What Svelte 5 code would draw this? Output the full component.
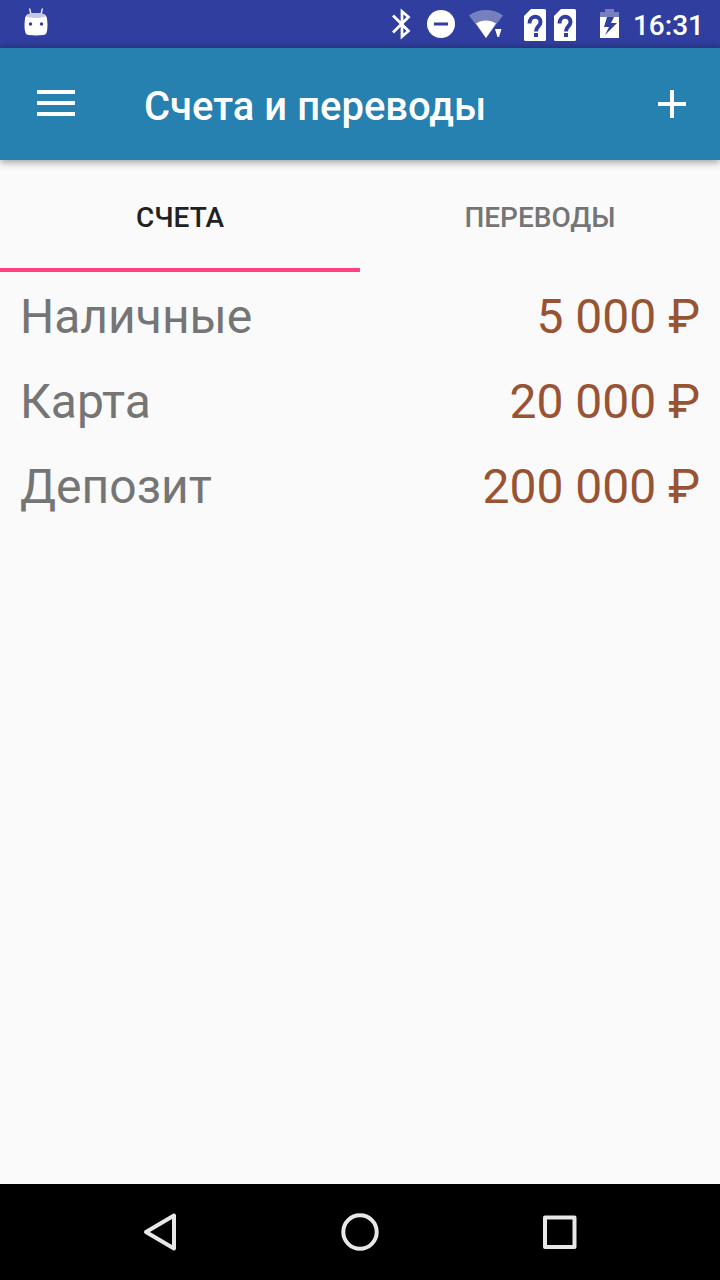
<script>
  const tabs = ['Счета', 'Переводы'];
  let activeTab = $state(0);

  const accounts = [
    { name: 'Наличные', amount: '5 000 ₽' },
    { name: 'Карта', amount: '20 000 ₽' },
    { name: 'Депозит', amount: '200 000 ₽' },
  ];
</script>

<div class="screen">
  <!-- System status bar -->
  <div class="status-bar">
    <svg width="24" height="48" viewBox="0 0 24 48" aria-hidden="true">
      <path d="M5.5 8.5L7 14M18.5 8.5L17 14" stroke="#dfe1f1" stroke-width="1.5" />
      <path d="M1 19c0-4 4-6 11-6s11 2 11 6c.7 5 .6 9 0 12-.5 3-2 4-4 4-5 .6-9 .6-14 0-2 0-3.5-1-4-4-.6-3-.7-7 0-12z" fill="#fff" />
      <path d="M2 16c1-2.2 5-3 10-3s9 .8 10 3c-3 2.500-17 2.500-20 0z" fill="#c5c8e4" />
      <circle cx="6.5" cy="24" r="1.7" fill="#303f9f" />
      <circle cx="17.5" cy="24" r="1.7" fill="#303f9f" />
    </svg>

    <div class="status-icons">
      <svg width="22" height="48" viewBox="0 0 22 48" aria-hidden="true">
        <path d="M2 15.500L17.500 31L11 36.500V11.500L17.500 17L2 32.500" fill="none" stroke="#fff" stroke-width="2.7" />
      </svg>
      <svg width="28" height="48" viewBox="0 0 28 48" aria-hidden="true">
        <circle cx="14" cy="24" r="14" fill="#fff" />
        <path d="M7 24h14" stroke="#303f9f" stroke-width="3" />
      </svg>
      <svg width="36" height="48" viewBox="0 0 36 48" aria-hidden="true">
        <path d="M0 15.500C10 8.200 24 8.200 34 15.500L24.500 28L17 38z" fill="#7680bf" />
        <path d="M7 23.500C13 19.500 21 19.500 27 23.500L17 38z" fill="#fff" />
        <path d="M26 29h6.500l-2.500 8h-1.500z" fill="#fff" />
      </svg>
      <div class="sims">
        {#each [1, 2] as slot (slot)}
          <svg width="22" height="48" viewBox="0 0 22 48" aria-hidden="true">
            <path d="M7 9H20.500Q22 9 22 10.500V39.500Q22 41 20.500 41H1.500Q0 41 0 39.500V16z" fill="#fff" />
            <path d="M5.500 23.500C5.500 14.800 16.500 15 16.500 22C16.500 26.500 12 26.500 12 31.500" fill="none" stroke="#303f9f" stroke-width="4" />
            <path d="M10 33h4v4h-4z" fill="#303f9f" />
          </svg>
        {/each}
      </div>
      <svg width="24" height="48" viewBox="0 0 24 48" aria-hidden="true">
        <path d="M5 17v-5h5V9h9v3h5v5z" fill="#7680bf" />
        <path d="M5 17h19v21H5z" fill="#fff" />
        <path d="M12 17L9 27h5l-4 8L22 23h-6L19 17z" fill="#303f9f" />
      </svg>
      <time class="clock">16:31</time>
    </div>
  </div>

  <header class="app-bar">
    <button class="icon-btn menu" aria-label="Меню">
      <svg width="38" height="48" viewBox="0 0 38 48">
        <path d="M0 12h38M0 23h38M0 34h38" stroke="#fff" stroke-width="4" />
      </svg>
    </button>
    <h1>Счета и переводы</h1>
    <button class="icon-btn" aria-label="Добавить">
      <svg width="48" height="48" viewBox="0 0 48 48">
        <path d="M10 24h28M24 10v28" stroke="#fff" stroke-width="4" />
      </svg>
    </button>
  </header>

  <div class="tabs" role="tablist">
    {#each tabs as tab, i}
      <button
        class="tab"
        class:active={activeTab === i}
        role="tab"
        aria-selected={activeTab === i}
        onclick={() => (activeTab = i)}
      >
        {tab}
      </button>
    {/each}
  </div>

  <main>
    {#if activeTab === 0}
      <ul class="accounts">
        {#each accounts as account}
          <li>
            <span>{account.name}</span>
            <span class="amount">{account.amount}</span>
          </li>
        {/each}
      </ul>
    {/if}
  </main>

  <!-- System navigation -->
  <nav class="nav-bar">
    <button aria-label="Назад">
      <svg width="48" height="48" viewBox="0 0 48 48">
        <path d="M10 24L38 7.500v33z" />
      </svg>
    </button>
    <button aria-label="Домой">
      <svg width="48" height="48" viewBox="0 0 48 48">
        <circle cx="24" cy="24" r="16.700" />
      </svg>
    </button>
    <button aria-label="Недавние">
      <svg width="48" height="48" viewBox="0 0 48 48">
        <rect x="9" y="9.500" width="29.500" height="29.500" />
      </svg>
    </button>
  </nav>
</div>

<style>
  :global(body) {
    margin: 0;
    background: #fafafa;
  }

  .screen {
    display: flex;
    flex-direction: column;
    min-height: 100vh;
    background: #fafafa;
    font-family: Roboto, 'Noto Sans', sans-serif;
  }

  button {
    padding: 0;
    border: none;
    background: none;
    font-family: inherit;
    cursor: pointer;
  }

  svg {
    display: block;
    flex-shrink: 0;
  }

  .status-bar {
    display: flex;
    justify-content: space-between;
    align-items: center;
    height: 48px;
    padding: 0 16px 0 24px;
    background: linear-gradient(180deg, #303f9f 88%, #2c3a8f 100%);
  }

  .status-icons {
    display: flex;
    align-items: center;
    gap: 14px;
  }

  .sims {
    display: flex;
    gap: 8px;
    padding: 0 5px;
  }

  .clock {
    padding-top: 4px;
    color: #fff;
    font-size: 28px;
    font-weight: 500;
    line-height: 44px;
  }

  .app-bar {
    display: flex;
    align-items: center;
    height: 112px;
    background: #2680b0;
    box-shadow: 0 2px 8px rgba(0, 0, 0, 0.4);
  }

  .icon-btn {
    display: flex;
    align-items: center;
    justify-content: center;
    width: 96px;
    height: 112px;
  }

  .menu {
    padding-left: 16px;
  }

  h1 {
    flex: 1;
    margin: 0;
    padding: 6px 0 0 48px;
    color: #fff;
    font-size: 40px;
    font-weight: 500;
    line-height: 48px;
  }

  .tabs {
    display: flex;
  }

  .tab {
    flex: 1;
    height: 112px;
    padding-top: 6px;
    border-bottom: 4px solid transparent;
    color: #757575;
    font-size: 28px;
    font-weight: 500;
    text-transform: uppercase;
  }

  .tab.active {
    border-bottom-color: #ff4081;
    color: #212121;
  }

  main {
    flex: 1;
  }

  .accounts {
    margin: 0;
    padding: 2px 20px;
    list-style: none;
  }

  .accounts li {
    display: flex;
    justify-content: space-between;
    padding: 14px 0;
    color: #757575;
    font-size: 48px;
    line-height: 57px;
  }

  .accounts .amount {
    color: #985332;
  }

  .nav-bar {
    display: flex;
    height: 96px;
    padding: 0 60px;
    background: #000;
  }

  .nav-bar button {
    display: flex;
    flex: 1;
    align-items: center;
    justify-content: center;
  }

  .nav-bar svg {
    fill: none;
    stroke: #e8e8e8;
    stroke-width: 4;
    stroke-linejoin: round;
  }
</style>
